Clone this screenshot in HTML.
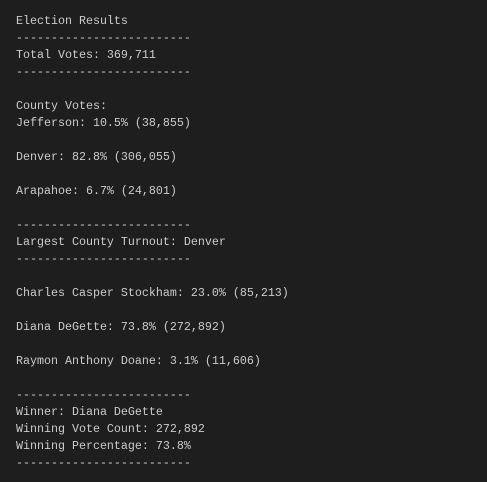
<!DOCTYPE html>
<html><head><style>
html,body{margin:0;padding:0;background:#1e1e1e;width:487px;height:482px;overflow:hidden}
pre{margin:0;padding:13px 0 0 16px;font-family:"Liberation Mono",monospace;font-size:11.67px;line-height:17px;color:#cccccc}
</style></head><body><pre>Election Results
-------------------------
Total Votes: 369,711
-------------------------

County Votes:
Jefferson: 10.5% (38,855)

Denver: 82.8% (306,055)

Arapahoe: 6.7% (24,801)

-------------------------
Largest County Turnout: Denver
-------------------------

Charles Casper Stockham: 23.0% (85,213)

Diana DeGette: 73.8% (272,892)

Raymon Anthony Doane: 3.1% (11,606)

-------------------------
Winner: Diana DeGette
Winning Vote Count: 272,892
Winning Percentage: 73.8%
-------------------------</pre></body></html>
